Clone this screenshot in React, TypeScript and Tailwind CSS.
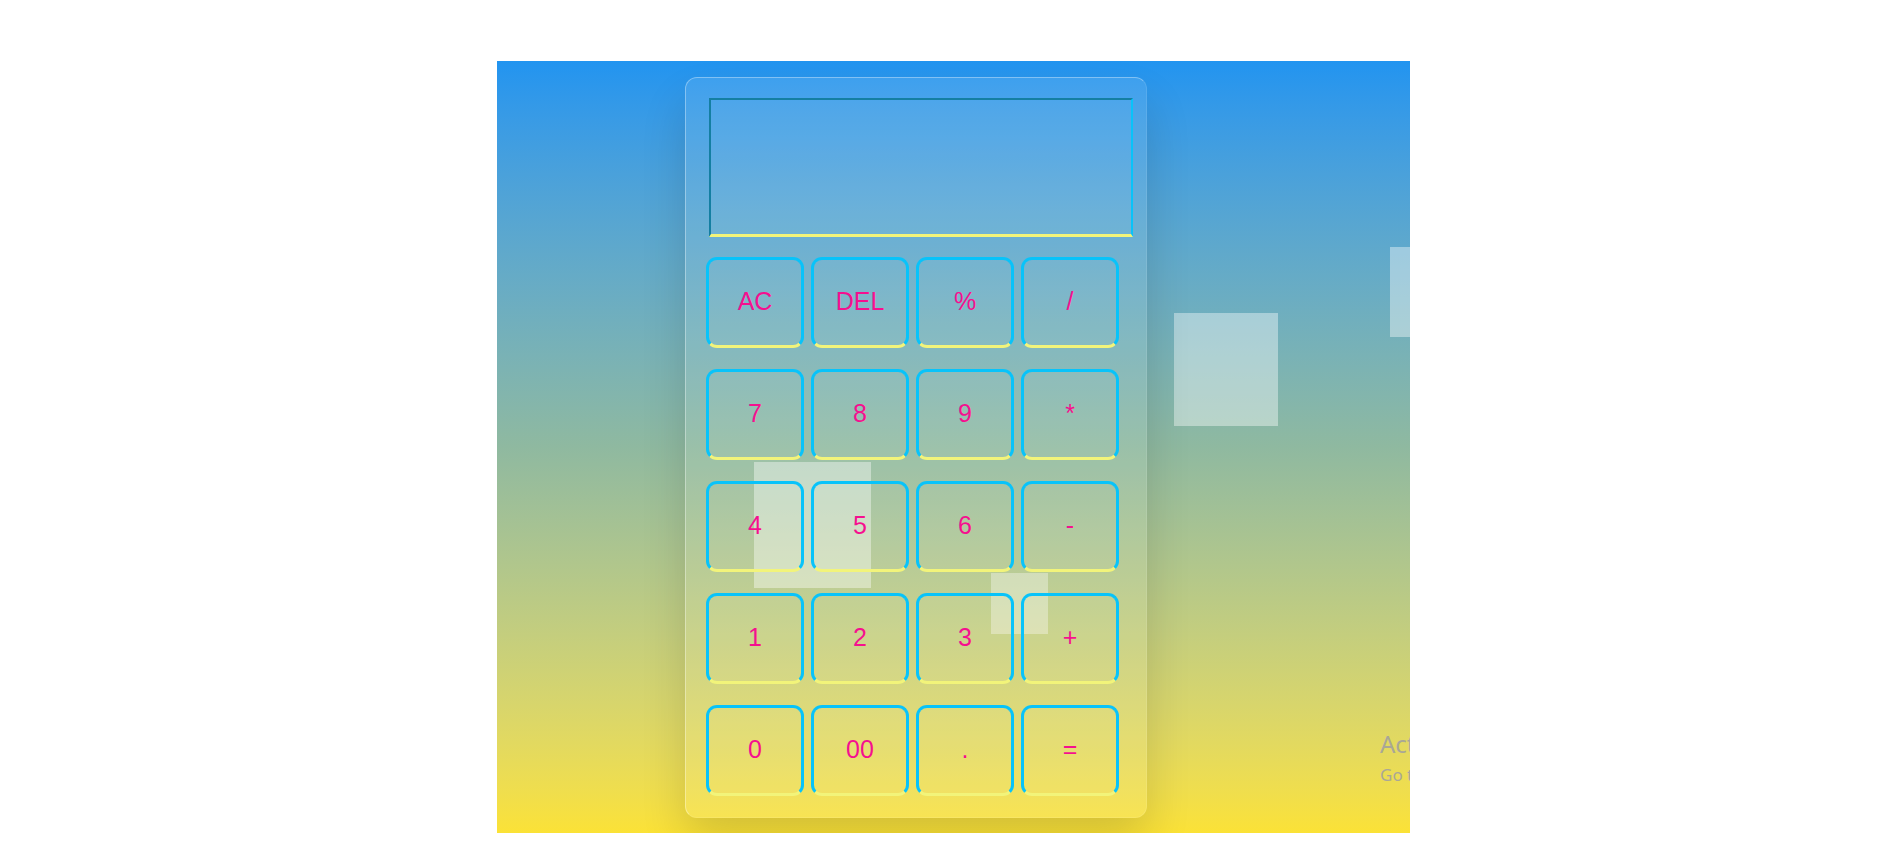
const keys = [
  ["AC", "DEL", "%", "/"],
  ["7", "8", "9", "*"],
  ["4", "5", "6", "-"],
  ["1", "2", "3", "+"],
  ["0", "00", ".", "="],
];

const Key = ({ label }: { label: string }) => {
  return (
    <button
      type="button"
      className="h-[91px] w-[98px] rounded-[11px] border-[3px] border-[#08c3fa] border-b-[#f2f47a] bg-white/[0.03] flex items-center justify-center text-[25px] text-[#f5108f] font-['Liberation_Sans',Arial,sans-serif]"
    >
      {label}
    </button>
  );
};

const Calculator = () => {
  return (
    <div className="relative w-[462px] h-[741px] rounded-[12px] bg-white/10 border border-white/10 border-t-white/35 border-l-white/35 shadow-[0_25px_45px_rgba(0,0,0,0.14)] pt-[20px] pl-[20px] flex flex-col">
      <div className="ml-[3px] h-[139px] w-[424px] border-2 border-t-[#147fa2] border-l-[#147fa2] border-r-[#08c3fa] border-b-[3px] border-b-[#f2f47a] bg-white/[0.04]" />
      <div className="mt-[20px] flex flex-col gap-[21px]">
        {keys.map((row, i) => (
          <div key={i} className="flex gap-[7px]">
            {row.map((k) => (
              <Key key={k} label={k} />
            ))}
          </div>
        ))}
      </div>
    </div>
  );
};

export default function App() {
  return (
    <div className="w-[1883px] h-[865px] bg-white pl-[497px] pt-[61px]">
      <div className="relative w-[913px] h-[772px] overflow-hidden bg-gradient-to-b from-[#2194f0] via-[#8fb9a0] to-[#fbe236] flex items-center pl-[188px]">
        {/* floating glass squares, seen through the calculator */}
        <div className="absolute left-[257px] top-[401px] w-[117px] h-[126px] bg-white/40" />
        <div className="absolute left-[494px] top-[512px] w-[57px] h-[61px] bg-white/35" />
        <div className="absolute left-[677px] top-[252px] w-[104px] h-[113px] bg-white/40" />
        <div className="absolute left-[893px] top-[186px] w-[80px] h-[90px] bg-white/40" />

        <Calculator />

        <div className="absolute left-[883px] top-[667px] whitespace-nowrap font-['Noto_Sans',sans-serif] text-[#a9a797]">
          <p className="text-[24px] leading-[32px]">Activate Windows</p>
          <p className="text-[17px] leading-[22px] mt-[4px]">Go to Settings to activate Windows.</p>
        </div>
      </div>
    </div>
  );
}
